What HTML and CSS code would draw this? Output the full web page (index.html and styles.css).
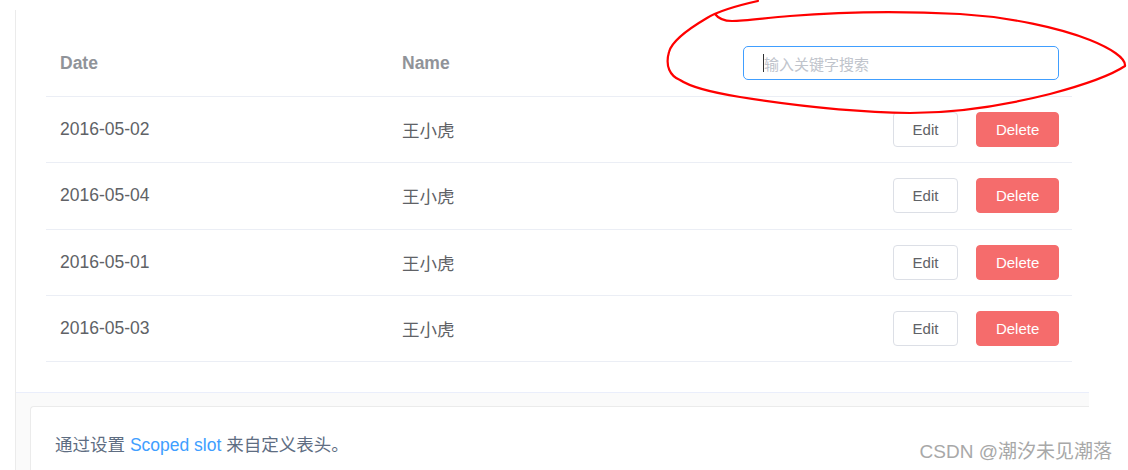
FILE: index.html
```html
<!DOCTYPE html>
<html lang="zh-CN">
<head>
<meta charset="utf-8">
<title>Table header slot</title>
<link rel="stylesheet" href="styles.css">
</head>
<body>
<div class="page">
  <div class="demo">
    <div class="source">
      <div class="table">
        <div class="row head">
          <div class="cell">Date</div>
          <div class="cell">Name</div>
          <div class="cell ops">
            <div class="search"><span class="caret"></span><span class="ph">输入关键字搜索</span></div>
          </div>
        </div>
        <div class="row">
          <div class="cell">2016-05-02</div>
          <div class="cell">王小虎</div>
          <div class="cell ops"><span class="btn">Edit</span><span class="btn danger">Delete</span></div>
        </div>
        <div class="row">
          <div class="cell">2016-05-04</div>
          <div class="cell">王小虎</div>
          <div class="cell ops"><span class="btn">Edit</span><span class="btn danger">Delete</span></div>
        </div>
        <div class="row">
          <div class="cell">2016-05-01</div>
          <div class="cell">王小虎</div>
          <div class="cell ops"><span class="btn">Edit</span><span class="btn danger">Delete</span></div>
        </div>
        <div class="row">
          <div class="cell">2016-05-03</div>
          <div class="cell">王小虎</div>
          <div class="cell ops"><span class="btn">Edit</span><span class="btn danger">Delete</span></div>
        </div>
      </div>
    </div>
    <div class="meta">
      <div class="desc">
        <p>通过设置 <span class="link">Scoped slot</span> 来自定义表头。</p>
      </div>
    </div>
  </div>
  <svg class="scribble" width="1128" height="120" viewBox="0 0 1128 120">
    <path d="M758,1 C740,5 720,10 707,18 C690,28 672,40 669,52 C665,66 670,76 680,80 C692,88 715,93 740,97 C790,105 850,112 910,113 C960,113 1010,104 1050,94 C1080,86 1110,76 1125,66 C1126,58 1110,48 1090,40 C1060,28 1010,17 960,14 C900,11 840,12 790,16 C765,18 745,21 732,21 C724,21 718,18 715,14" fill="none" stroke="#ff0000" stroke-width="2.2" stroke-linecap="round" stroke-linejoin="round"/>
  </svg>
  <div class="watermark">CSDN @潮汐未见潮落</div>
</div>
</body>
</html>
```

FILE: styles.css
```css
html, body {
  margin: 0;
  padding: 0;
  overflow: hidden;
  background: #ffffff;
}

body {
  font-family: "Liberation Sans", Arial, "Noto Sans CJK SC", sans-serif;
  color: #606266;
}

.page {
  position: relative;
  width: 1128px;
  height: 470px;
  overflow: hidden;
}

.demo {
  margin: 10px 0 0 15px;
  width: 1073px;
  border-left: 1px solid #ebebeb;
}

.source {
  padding: 20px 16px 30px 30px;
}

.table {
  width: 1026px;
  display: flex;
  flex-direction: column;
}

.row {
  display: grid;
  grid-template-columns: 342px 342px 1fr;
  box-sizing: border-box;
  height: 66.25px;
  border-bottom: 1px solid #ebeef5;
  font-size: 17.5px;
}

.row.head {
  height: 67px;
  color: #909399;
  font-weight: bold;
}

.cell {
  display: flex;
  align-items: center;
  padding-left: 14px;
  white-space: nowrap;
}

.cell.ops {
  justify-content: flex-end;
  padding-left: 0;
  padding-right: 13px;
  gap: 18px;
}

.search {
  box-sizing: border-box;
  width: 316px;
  height: 34px;
  border: 1px solid #409eff;
  border-radius: 5px;
  display: flex;
  align-items: center;
  padding-left: 19px;
  font-weight: normal;
  font-size: 15px;
}

.caret {
  width: 1px;
  height: 18px;
  background: #303133;
}

.ph {
  color: #c0c4cc;
}

.btn {
  box-sizing: border-box;
  height: 35px;
  display: inline-flex;
  align-items: center;
  padding: 0 18.75px;
  font-size: 15px;
  border: 1px solid #dcdfe6;
  border-radius: 4px;
  color: #606266;
  background: #ffffff;
}

.btn.danger {
  background: #f56c6c;
  border-color: #f56c6c;
  color: #ffffff;
}

.meta {
  border-top: 1px solid #eaeefb;
  background: #fafafa;
  padding: 13px 0 0 14px;
}

.desc {
  background: #ffffff;
  border: 1px solid #ebebeb;
  border-right: none;
  border-radius: 4px 0 0 4px;
  padding: 25px 24px;
  height: 80px;
}

.desc p {
  margin: 0;
  font-size: 17.5px;
  line-height: 27.5px;
  color: #5e6d82;
}

.link {
  color: #409eff;
}

.scribble {
  position: absolute;
  left: 0;
  top: 0;
}

.watermark {
  position: absolute;
  right: 16px;
  top: 440px;
  font-size: 19px;
  line-height: 24px;
  color: #a8a8a8;
  text-shadow: 0 0 1px #ffffff;
  white-space: nowrap;
}
```
